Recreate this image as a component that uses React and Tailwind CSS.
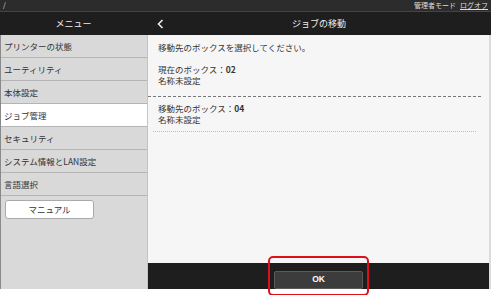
import { useState } from 'react'

const menuItems = [
  'プリンターの状態',
  'ユーティリティ',
  '本体設定',
  'ジョブ管理',
  'セキュリティ',
  'システム情報とLAN設定',
  '言語選択',
]

export default function App() {
  const [active] = useState('ジョブ管理')
  const font = { fontFamily: '"Noto Sans CJK JP", "Liberation Sans", sans-serif' }

  return (
    <div className="w-[491px] h-[295px] flex flex-col bg-white overflow-hidden text-[#333]" style={font}>
      {/* Top bar */}
      <div className="h-[12px] bg-[#2c2c2c] border-b border-[#444] flex items-center justify-between px-[3px] text-[7px] text-[#ddd]">
        <span className="leading-none">/</span>
        <div className="flex items-center gap-[4px] leading-none">
          <span>管理者モード</span>
          <span className="underline">ログオフ</span>
        </div>
      </div>

      {/* Header */}
      <div className="h-[23px] bg-[#1e1e1e] flex items-center text-[#eee] text-[9px]">
        <div className="w-[147px] text-center">メニュー</div>
        <div className="flex-1 flex items-center relative">
          <svg className="ml-[10px]" width="7" height="10" viewBox="0 0 7 10">
            <path d="M5.5 1 L1.5 5 L5.5 9" fill="none" stroke="#eee" strokeWidth="1.6" />
          </svg>
          <span className="absolute left-0 right-0 text-center pointer-events-none">ジョブの移動</span>
        </div>
      </div>

      {/* Body */}
      <div className="flex flex-1 min-h-0">
        {/* Sidebar */}
        <div className="w-[148px] bg-[#d9d9d9] border-l border-[#8a8a8a] border-r border-r-[#c4c4c4] flex flex-col text-[8.5px]">
          {menuItems.map((item) => (
            <div
              key={item}
              className={`h-[23px] flex items-center pl-[3px] border-b border-[#b5b5b5] ${
                item === active ? 'bg-white' : ''
              }`}
            >
              {item}
            </div>
          ))}
          <div className="px-[4px] pt-[4px]">
            <button className="w-[89px] h-[19px] bg-white border border-[#aaa] rounded-[3px] text-[8.5px] text-[#333]">
              マニュアル
            </button>
          </div>
        </div>

        {/* Content */}
        <div className="flex-1 flex flex-col bg-[#f6f6f6] border-r-2 border-[#dcdcdc]">
          <div className="flex-1 text-[8.5px] leading-[11px]">
            <div className="pl-[10px] pt-[7px]">移動先のボックスを選択してください。</div>
            <div className="pl-[10px] pt-[11px]">
              現在のボックス：<span className="font-bold">02</span>
            </div>
            <div className="pl-[10px]">名称未設定</div>
            <div className="mt-[10px] mr-[8px] border-t border-dashed border-[#777]" />
            <div className="pl-[10px] pt-[6px]">
              移動先のボックス：<span className="font-bold">04</span>
            </div>
            <div className="pl-[10px]">名称未設定</div>
            <div className="mt-[6px] ml-[5px] mr-[13px] border-t border-dotted border-[#bbb]" />
          </div>

          {/* Bottom bar */}
          <div className="h-[26px] bg-[#1e1e1e] flex items-center justify-center">
            <div className="relative">
              <button className="w-[89px] h-[18px] bg-[#3c3c3c] border border-[#5a5a5a] rounded-[2px] text-white text-[8.5px] font-bold" style={{ fontFamily: '"Liberation Sans", sans-serif' }}>
                OK
              </button>
              <div className="absolute z-10 -left-[6px] -right-[6px] -top-[7px] -bottom-[7px] border-2 border-[#e0101a] rounded-[5px] pointer-events-none" />
            </div>
          </div>
        </div>
      </div>

      {/* bottom strip */}
      <div className="h-[6px] bg-white" />
    </div>
  )
}
